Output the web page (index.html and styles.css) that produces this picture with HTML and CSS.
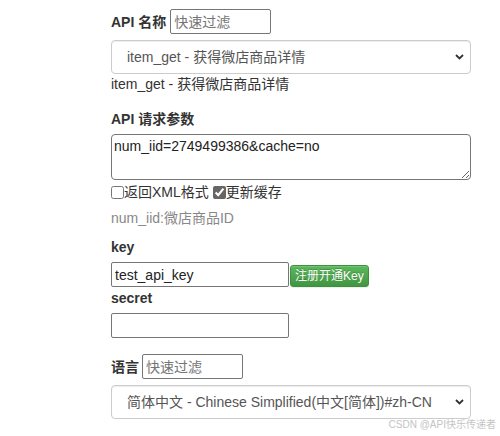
FILE: index.html
```html
<!DOCTYPE html>
<html lang="zh-CN">
<head>
<meta charset="utf-8">
<title>API 测试</title>
<link rel="stylesheet" href="styles.css">
</head>
<body>
<div class="page">
  <div class="filter-row">
    <label class="label">API 名称</label>
    <input class="filter" type="text" placeholder="快速过滤">
  </div>
  <div class="select-wrap sel-api">
    <select class="select">
      <option>item_get - 获得微店商品详情</option>
    </select>
    <svg class="chev" width="9" height="6" viewBox="0 0 9 6"><path d="M1 1 L4.5 4.5 L8 1" fill="none" stroke="#333" stroke-width="1.8"/></svg>
  </div>
  <div class="desc">item_get - 获得微店商品详情</div>

  <div class="label block params-label">API 请求参数</div>
  <textarea class="params">num_iid=2749499386&amp;cache=no</textarea>
  <div class="checks">
    <label><input type="checkbox" class="cb">返回XML格式</label>
    <label><input type="checkbox" class="cb" checked>更新缓存</label>
  </div>
  <div class="help">num_iid:微店商品ID</div>

  <div class="label block key-label">key</div>
  <div class="key-row">
    <input class="text" type="text" value="test_api_key">
    <button class="btn-success" type="button">注册开通Key</button>
  </div>
  <div class="label block secret-label">secret</div>
  <input class="text secret" type="text">

  <div class="filter-row lang-row">
    <label class="label">语言</label>
    <input class="filter" type="text" placeholder="快速过滤">
  </div>
  <div class="select-wrap sel-lang">
    <select class="select">
      <option>简体中文 - Chinese Simplified(中文[简体])#zh-CN</option>
    </select>
    <svg class="chev" width="9" height="6" viewBox="0 0 9 6"><path d="M1 1 L4.5 4.5 L8 1" fill="none" stroke="#333" stroke-width="1.8"/></svg>
  </div>
</div>
<div class="watermark">CSDN @API快乐传递者</div>
</body>
</html>
```
FILE: styles.css
```css
* { box-sizing: border-box; }
html, body {
  margin: 0;
  padding: 0;
  background: #fff;
}
body {
  width: 500px;
  height: 436px;
  position: relative;
  overflow: hidden;
  font-family: "Liberation Sans", Arial, "Noto Sans CJK SC", sans-serif;
  font-size: 14px;
  line-height: 20px;
  color: #333;
}
.page {
  padding: 9px 0 0 111px;
  width: 471px;
}
.label {
  font-weight: bold;
  color: #333;
}
.block { display: block; }
.filter-row {
  display: flex;
  align-items: center;
  gap: 4px;
  height: 25px;
}
.lang-row { margin-top: 16px; gap: 3px; }
.filter {
  width: 101px;
  height: 25px;
  border: 1px solid #767676;
  border-radius: 2px;
  padding: 0 3px;
  font: 14px "Liberation Sans", Arial, "Noto Sans CJK SC", sans-serif;
  color: #222;
  margin: 0;
}
.filter::placeholder { color: #757575; }
.select-wrap {
  position: relative;
  margin-top: 6px;
  width: 360px;
}
.select {
  display: block;
  appearance: none;
  -webkit-appearance: none;
  width: 360px;
  height: 34px;
  margin: 0;
  padding: 0 30px 0 15px;
  border: 1px solid #ccc;
  border-radius: 4px;
  background: #fff;
  box-shadow: inset 0 1px 1px rgba(0,0,0,.075);
  font: 14px "Liberation Sans", Arial, "Noto Sans CJK SC", sans-serif;
  color: #555;
}
.chev {
  position: absolute;
  right: 7px;
  top: 14px;
  pointer-events: none;
}
.desc { margin-top: 0; }
.params-label { margin-top: 15px; }
.params {
  display: block;
  margin: 5px 0 0;
  width: 360px;
  height: 46px;
  padding: 3px 2px 2px;
  border: 1px solid #767676;
  border-radius: 4px;
  font: 14px/17px "Liberation Sans", Arial, "Noto Sans CJK SC", sans-serif;
  color: #222;
}
.checks {
  margin-top: 2px;
  color: #333;
}
.checks label { font-weight: normal; }
.cb {
  margin: 0;
  width: 13px;
  height: 13px;
  accent-color: #666;
  vertical-align: -2px;
}
.help {
  margin-top: 6px;
  color: #888;
}
.key-label { margin-top: 9px; }
.key-row {
  margin-top: 5px;
  display: flex;
  align-items: flex-end;
  gap: 1px;
}
.text {
  display: block;
  width: 178px;
  height: 25px;
  margin: 0;
  padding: 0 3px;
  border: 1px solid #767676;
  border-radius: 2px;
  font: 14px "Liberation Sans", Arial, "Noto Sans CJK SC", sans-serif;
  color: #222;
}
.btn-success {
  height: 22px;
  margin: 0;
  padding: 0 4px;
  border: 1px solid #3e8f3e;
  border-radius: 3px;
  background: linear-gradient(to bottom, #5cb85c 0%, #419641 100%);
  color: #fff;
  text-shadow: 0 -1px 0 rgba(0,0,0,.2);
  box-shadow: inset 0 1px 0 rgba(255,255,255,.15), 0 1px 1px rgba(0,0,0,.075);
  font: 12px/20px "Liberation Sans", Arial, "Noto Sans CJK SC", sans-serif;
  white-space: nowrap;
}
.secret-label { margin-top: 1px; }
.secret { margin-top: 5px; }
.watermark {
  position: absolute;
  right: 4px;
  bottom: 6px;
  font: 10px/11px "Liberation Sans", Arial, "Noto Sans CJK SC", sans-serif;
  color: #c4c4c4;
}
```
